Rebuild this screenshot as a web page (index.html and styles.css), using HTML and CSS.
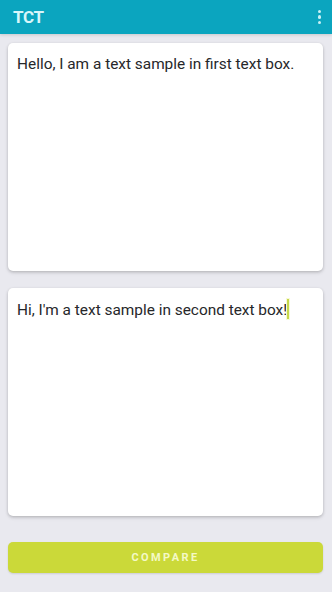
FILE: index.html
```html
<!DOCTYPE html>
<html>
<head>
<meta charset="utf-8">
<link rel="stylesheet" href="styles.css">
</head>
<body>
<div class="app">
  <header class="bar">
    <span class="title">TCT</span>
    <span class="menu"><i></i><i></i><i></i></span>
  </header>
  <main class="content">
    <div class="card"><p class="text">Hello, I am a text sample in first text box.</p></div>
    <div class="card second"><p class="text">Hi, I'm a text sample in second text box!<span class="caret"></span></p></div>
    <button class="compare">COMPARE</button>
  </main>
</div>
</body>
</html>
```
FILE: styles.css
```css
* { box-sizing: border-box; }
html, body { margin: 0; padding: 0; }
body {
  width: 332px;
  height: 592px;
  background: #e9e9ef;
  font-family: Roboto, "Noto Sans", sans-serif;
  overflow: hidden;
}
.app { display: flex; flex-direction: column; height: 592px; }
.bar {
  height: 34px;
  background: #0ba5bf;
  display: flex;
  align-items: center;
  justify-content: space-between;
  padding: 0 13px 0 13px;
  box-shadow: 0 1px 3px rgba(0,0,0,0.15);
}
.title {
  color: #d8f6fa;
  font-weight: 700;
  font-size: 17px;
  letter-spacing: -0.3px;
}
.menu {
  display: flex;
  flex-direction: column;
  gap: 2px;
  margin-right: -2px;
}
.menu i {
  display: block;
  width: 3.5px;
  height: 3.5px;
  border-radius: 50%;
  background: #c9f1f6;
}
.content {
  padding: 9px 9px 0 8px;
  display: flex;
  flex-direction: column;
}
.card {
  background: #fff;
  height: 228px;
  border-radius: 5px;
  box-shadow: 0 1px 3px rgba(0,0,0,0.18), 0 2px 4px rgba(0,0,0,0.08);
  padding: 11px 9px;
}
.card.second { margin-top: 17px; }
.text {
  margin: 0;
  font-size: 15.4px;
  color: #26272a;
  line-height: 21px;
}
.caret {
  display: inline-block;
  width: 2px;
  height: 20px;
  background: #c7d84a;
  vertical-align: -4px;
  margin-left: 0;
  box-shadow: 0 0 0 1px #f6f9d6;
}
.compare {
  margin-top: 26px;
  height: 31px;
  border: 0;
  border-radius: 5px;
  background: #cbd939;
  color: #f4f9c6;
  font-family: Roboto, "Noto Sans", sans-serif;
  font-weight: 700;
  font-size: 11px;
  letter-spacing: 2.4px;
  box-shadow: 0 1px 2px rgba(0,0,0,0.12);
  padding: 0;
}
```
